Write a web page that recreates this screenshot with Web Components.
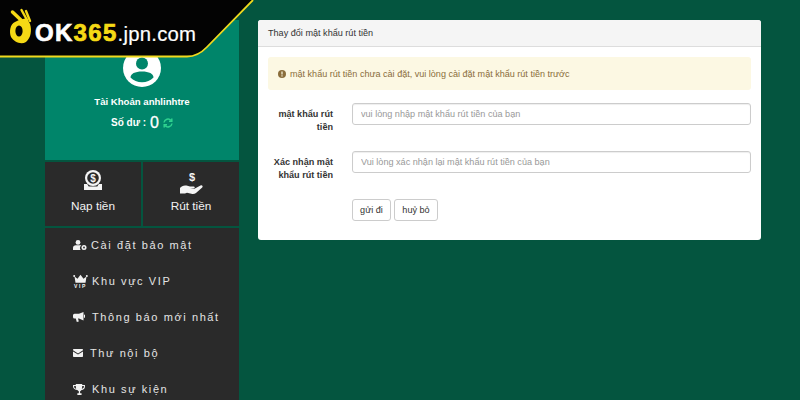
<!DOCTYPE html>
<html lang="vi"><head><meta charset="utf-8"><title>OK365</title>
<style>
html,body{margin:0;height:400px;overflow:hidden;background:#04553f}
body{font-family:"Liberation Sans",Arial,sans-serif}
</style></head><body>
<app-shell>
<site-logo></site-logo>
<side-bar slot="side" user="anhlinhtre">
<nav-item icon="usercog" w="18" label="Cài đặt bảo mật"></nav-item>
<nav-item icon="vip" w="19" label="Khu vực VIP"></nav-item>
<nav-item icon="bull" w="19" label="Thông báo mới nhất"></nav-item>
<nav-item icon="mail" w="17" label="Thư nội bộ"></nav-item>
<nav-item icon="trophy" w="19" label="Khu sự kiện"></nav-item>
</side-bar>
<form-panel slot="main" title="Thay đổi mật khẩu rút tiền">
<alert-box>mật khẩu rút tiền chưa cài đặt, vui lòng cài đặt mật khẩu rút tiền trước</alert-box>
<form-row label="mật khẩu rút tiền" placeholder="vui lòng nhập mật khẩu rút tiền của bạn"></form-row>
<form-row label="Xác nhận mật khẩu rút tiền" placeholder="Vui lòng xác nhận lại mật khẩu rút tiền của bạn"></form-row>
<form-actions></form-actions>
</form-panel>
</app-shell>
<script>
const ICONS={
usercog:'<svg width="14" height="10" viewBox="0 0 14 10"><circle cx="5" cy="2.400" r="2.400" fill="#f2f2f2"/><path d="M0 10V8C0 6.200 1.300 5.300 2.800 5.300h4.400c.5 0 .9.100 1.200.2A3 3 0 0 0 7.600 10z" fill="#f2f2f2"/><circle cx="11" cy="7.500" r="2.500" fill="#f2f2f2"/><circle cx="11" cy="7.500" r=".9" fill="#2a2a2a"/></svg>',
vip:'<svg width="15" height="14" viewBox="0 0 15 14"><path d="M1.500 2.500l3 2.300L7.500.8l3 4 3-2.300-1 6.200H2.500z" fill="#f2f2f2"/><circle cx="1.200" cy="2" r="1" fill="#f2f2f2"/><circle cx="13.800" cy="2" r="1" fill="#f2f2f2"/><text x="7.500" y="13.700" text-anchor="middle" font-family="Liberation Sans" font-weight="700" font-size="5" fill="#f2f2f2">VIP</text></svg>',
bull:'<svg width="12" height="10" viewBox="0 0 12 10"><path d="M10.500 0v8.500L6 6.500H5l.8 3-2 .5-1-3.500H1.500A1.500 1.500 0 0 1 0 5V3.300A1.500 1.500 0 0 1 1.500 1.800H6z" fill="#f2f2f2"/><rect x="11" y="2.700" width="1" height="3" fill="#f2f2f2"/></svg>',
mail:'<svg width="10" height="8" viewBox="0 0 10 8"><path d="M0 .8A.8.8 0 0 1 .8 0h8.400a.8.800 0 0 1 .8.800v.4L5 4.400 0 1.200z" fill="#f2f2f2"/><path d="M0 2.400L5 5.500l5-3.100v4.800a.8.800 0 0 1-.8.800H.8A.8.800 0 0 1 0 7.200z" fill="#f2f2f2"/></svg>',
trophy:'<svg width="12" height="11" viewBox="0 0 13 12"><path fill-rule="evenodd" d="M3 0h7v1h3v2c0 2-1.600 3.300-3.700 3.600-.5.700-1 1-1.600 1.200V10h1.600v2H4.700v-2h1.600V7.800c-.6-.2-1.100-.5-1.600-1.200C2.600 6.300 0 5 0 3V1h3zM1.200 2.200v.8c0 1 .8 1.900 2.200 2.300C3.200 4.400 3 3.300 3 2.200zm10.600 0H10c0 1.100-.2 2.200-.4 3.100 1.400-.4 2.200-1.300 2.200-2.300z" fill="#f2f2f2"/></svg>'
};
function def(name,css,html){customElements.define(name,class extends HTMLElement{connectedCallback(){if(this.shadowRoot)return;const r=this.attachShadow({mode:'open'});r.innerHTML='<style>'+css+'</style>'+(typeof html==='function'?html(this):html);}});}

def('app-shell',':host{display:flex;align-items:flex-start;gap:19px;padding:20px 0 0 45px;box-sizing:border-box;height:400px;overflow:hidden;position:relative}','<slot></slot><slot name="side"></slot><slot name="main"></slot>');

def('site-logo',`:host{position:absolute;left:0;top:0;width:254px;height:60px;z-index:5;display:block}
svg{position:absolute;left:0;top:0}
.t{position:absolute;left:35px;top:19px;font:700 24px/28px "Liberation Sans",Arial,sans-serif;color:#fff;white-space:nowrap;letter-spacing:1.300px;-webkit-text-stroke:.7px #fff}
.t b{color:#f5d915;-webkit-text-stroke:.7px #f5d915}.t i{font-style:normal;font-weight:400;font-size:20.300px;letter-spacing:.25px;-webkit-text-stroke:.2px #fff}`,
`<svg width="254" height="60" viewBox="0 0 254 60">
<path d="M0 0H253L207 47Q198 56.500 187 56.500H0z" fill="#030303"/>
<path d="M0 56.500H187Q198 56.500 207 47L253 0" fill="none" stroke="#f0d91e" stroke-width="1.800"/>
<g fill="#f5d915" stroke="#f5d915" stroke-linecap="round">
<path d="M15 22C10 24 9 32 11 37c3 5 10 8 15 5 5-4 6-12 4-18l-3-6-8 2z" stroke="none"/>
<path d="M12.500 12L22 21" stroke-width="3.500" fill="none"/>
<path d="M21.500 10L27 20" stroke-width="2.400" fill="none"/>
<path d="M26 11L30 21" stroke-width="2.400" fill="none"/>
<ellipse cx="19" cy="31" rx="3.600" ry="5.600" fill="#030303" stroke="none"/>
</g></svg>
<div class="t">OK<b>365</b><i>.jpn.com</i></div>`);

def('side-bar',`:host{display:block;width:194px;flex:none;color:#f2f2f2}
.top{background:#00856a;height:140px;box-sizing:border-box;padding-top:29px;text-align:center;color:#fff}
.av{width:38px;height:38px;margin:0 auto;display:block}
.u{font-size:9.600px;font-weight:700;line-height:12px;margin-top:9px}
.b{font-size:10px;font-weight:700;line-height:20px;margin-top:5px;display:flex;justify-content:center;align-items:center;gap:3px}
.b em{font-style:normal;font-size:16px;font-weight:400;margin:0 1px;-webkit-text-stroke:.3px #fff}
.tiles{display:grid;grid-template-columns:96px 1fr;gap:2px;margin-top:2px;background:#04553f}
.tile{background:#2a2a2a;height:64px;display:flex;flex-direction:column;align-items:center;color:#f2f2f2;font-size:11.800px;box-sizing:border-box;padding-top:6px}
.tile svg{display:block;height:26px}.tile span{margin-top:4px;line-height:16px}
.menu{background:#2a2a2a;margin-top:2px;height:300px;margin-bottom:0}
.menu slot{display:block;transform:translateY(-1px)}`,
h=>`<div class="top"><svg class="av" viewBox="0 0 38 38"><circle cx="19" cy="19" r="19" fill="#fff"/><circle cx="19" cy="14.500" r="6" fill="#00856a"/><path d="M7.500 28.500c0-3.800 4.500-6 11.500-6s11.500 2.200 11.500 6c-2.800 3-7 4.700-11.500 4.700s-8.700-1.700-11.500-4.700z" fill="#00856a"/></svg>
<div class="u">Tài Khoản ${h.getAttribute('user')}</div>
<div class="b">Số dư : <em>0</em><svg width="10" height="10" viewBox="0 0 10 10" fill="none" stroke="#2fd28f" stroke-width="1.500"><path d="M1 4.500A4 4 0 0 1 8 2.500"/><path d="M9 5.500A4 4 0 0 1 2 7.500"/><path d="M8.800.5v2.800H6"/><path d="M1.200 9.500V6.700H4"/></svg></div></div>
<div class="tiles"><div class="tile"><svg width="20" height="26" viewBox="0 0 20 26"><circle cx="10" cy="10" r="8" fill="#f5f5f5"/><circle cx="10" cy="10" r="5.800" fill="#2a2a2a"/><text x="10" y="13.500" text-anchor="middle" font-family="Liberation Sans" font-size="10" font-weight="700" fill="#f5f5f5">$</text><path d="M1 16h3.200l1.500 2.500h8.600L15.800 16H19v6H1z" fill="#f5f5f5"/></svg><span>Nạp tiền</span></div>
<div class="tile"><svg width="28" height="26" viewBox="0 0 28 26" style="transform:translateX(2px)"><text x="13" y="13" text-anchor="middle" font-family="Liberation Sans" font-size="11" font-weight="700" fill="#f5f5f5">$</text><path d="M1 20c1.500-2 4-3 6.500-2.400l3.500 1h3.700c1.200 0 1.500 1.700.2 2l-3.900.4h4l6.500-3.600c1.500-.7 2.900.8 1.700 2.100L17 25c-1 .7-2.300 1-3.600.9L8 24.800l-2 .8H1z" fill="#f5f5f5"/></svg><span>Rút tiền</span></div></div>
<div class="menu"><slot></slot></div>`);

def('nav-item',`:host{display:flex;align-items:center;height:36px;padding-left:28px;box-sizing:border-box;font-size:11px;letter-spacing:1.600px;color:#e4e4e4;white-space:nowrap}
.i{display:flex;flex:none}`,
h=>`<span class="i" style="width:${h.getAttribute('w')}px">${ICONS[h.getAttribute('icon')]}</span><span>${h.getAttribute('label')}</span>`);

def('form-panel',`:host{display:block;width:503px;height:220px;background:#fff;border-radius:3px;overflow:hidden;flex:none;color:#333}
.h{height:26px;background:#f5f5f5;border-bottom:1px solid #ddd;font-size:9.100px;line-height:26px;padding-left:10px;color:#333}
.c{padding:10px}`,
h=>`<div class="h">${h.getAttribute('title')}</div><div class="c"><slot></slot></div>`);

def('alert-box',`:host{display:flex;align-items:center;gap:4px;height:33px;box-sizing:border-box;background:#fcf8e3;border-radius:3px;padding:0 10px;font-size:9.050px;color:#8a6d3b;margin-bottom:13px}`,
`<svg width="8" height="8" viewBox="0 0 8 8"><circle cx="4" cy="4" r="4" fill="#8a6d3b"/><rect x="3.400" y="1.500" width="1.200" height="3" fill="#fcf8e3"/><rect x="3.400" y="5.300" width="1.200" height="1.200" fill="#fcf8e3"/></svg><span><slot></slot></span>`);

def('form-row',`:host{display:flex;align-items:flex-start;gap:19px;height:48px}
label{width:65px;flex:none;text-align:right;font-size:9.100px;font-weight:700;line-height:13px;padding-top:5px;color:#333}
input{flex:1;min-width:0;height:22px;box-sizing:border-box;border:1px solid #ccc;border-radius:3px;padding:0 8px;font:9.100px "Liberation Sans",Arial,sans-serif;outline:none;box-shadow:inset 0 1px 1px rgba(0,0,0,.07);background:#fff}
input::placeholder{color:#999;opacity:1}`,
h=>`<label>${h.getAttribute('label')}</label><input placeholder="${h.getAttribute('placeholder')}">`);

def('form-actions',`:host{display:flex;gap:3px;padding-left:84px}
button{height:22px;box-sizing:border-box;border:1px solid #ccc;border-radius:3px;background:#fff;color:#333;font:9.100px "Liberation Sans",Arial,sans-serif;padding:0;width:39px}
button+button{width:44px}`,
`<button>gửi đi</button><button>huỷ bỏ</button>`);
</script>
</body></html>
